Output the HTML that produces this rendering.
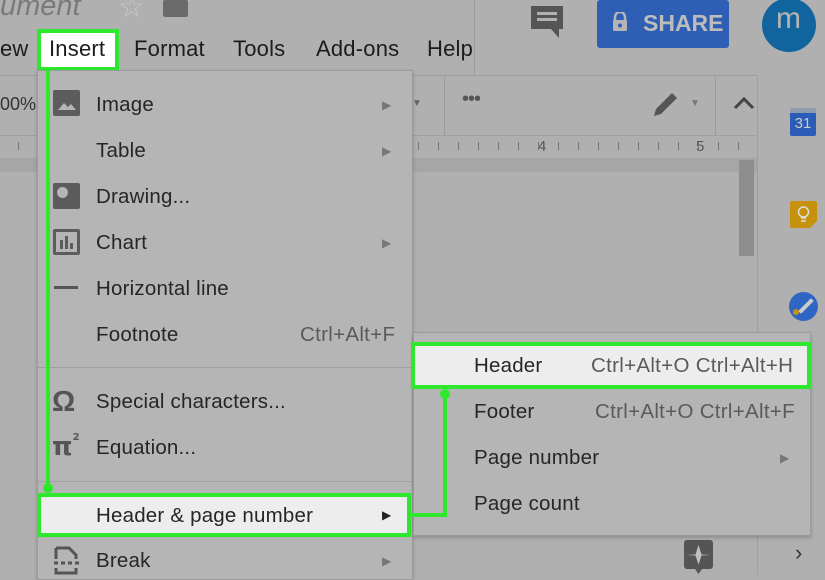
<!DOCTYPE html>
<html><head><style>
*{margin:0;padding:0;box-sizing:border-box}
body{width:825px;height:575px;overflow:hidden;background:#b0b0b0;font-family:"Liberation Sans",Arial,sans-serif;position:relative;color:#222}
.a{position:absolute}
.t{position:absolute;font-size:20.5px;color:#262626;white-space:nowrap;line-height:24px;letter-spacing:0.2px}
.mb{position:absolute;font-size:22px;color:#1c1c1c;top:36px;line-height:26px;letter-spacing:0.2px}
.arr{position:absolute;font-size:12px;color:#777}
.sc{position:absolute;font-size:20.5px;color:#5a5a5a;line-height:24px;white-space:nowrap;letter-spacing:0.3px}
.g{position:absolute;background:#2ee82e}
</style></head><body>
<!-- top bar -->
<div class="a" style="left:0;top:-10px;font-size:29px;font-style:italic;color:#7a7a7a">ument</div>
<div class="a" style="left:118px;top:-10px;font-size:30px;color:#c6c6c6">☆</div>
<div class="a" style="left:163px;top:0;width:25px;height:17px;background:#6b6b6b;border-radius:2px"></div>
<div class="a" style="left:474px;top:0;width:1px;height:75px;background:#9c9c9c"></div>
<svg class="a" style="left:530px;top:5px" width="34" height="34" viewBox="0 0 34 34"><path d="M1 1h32v23H29v9l-8-9H1z" fill="#555"/><rect x="7" y="7" width="20" height="3" fill="#b0b0b0"/><rect x="7" y="13" width="20" height="3" fill="#b0b0b0"/></svg>
<div class="a" style="left:597px;top:0;width:132px;height:48px;background:#2f5eb5;border-radius:3px"></div>
<svg class="a" style="left:612px;top:12px" width="16" height="20" viewBox="0 0 16 20"><path d="M3 8V5a5 5 0 0110 0v3" stroke="#b5b5b5" stroke-width="2.5" fill="none"/><rect x="1" y="8" width="14" height="11" rx="1" fill="#b5b5b5"/><circle cx="8" cy="13.5" r="2" fill="#2f5eb5"/></svg>
<div class="a" style="left:643px;top:10px;font-size:23px;color:#bcbcbc;font-weight:bold">SHARE</div>
<div class="a" style="left:762px;top:-2px;width:54px;height:54px;border-radius:50%;background:#12649e"></div>
<div class="a" style="left:776px;top:2px;font-size:30px;color:#b5b5b5">m</div>
<!-- menubar -->
<div class="mb" style="left:0">ew</div>
<div class="a" style="left:37px;top:29px;width:82px;height:42px;background:#fff;border:4px solid #2ee82e"></div>
<div class="mb" style="left:49px">Insert</div>
<div class="mb" style="left:134px">Format</div>
<div class="mb" style="left:233px">Tools</div>
<div class="mb" style="left:316px">Add-ons</div>
<div class="mb" style="left:427px">Help</div>
<!-- toolbar -->
<div class="a" style="left:0;top:75px;width:757px;height:1px;background:#9c9c9c"></div>
<div class="a" style="left:0;top:135px;width:757px;height:1px;background:#a0a0a0"></div>
<div class="a" style="left:0;top:158px;width:757px;height:14px;background:#a6a6a6"></div>
<div class="a" style="left:0;top:94px;font-size:18px;color:#333">00%</div>
<div class="a" style="left:412px;top:98px;font-size:10px;color:#666">▼</div>
<div class="a" style="left:444px;top:76px;width:1px;height:59px;background:#9c9c9c"></div>
<div class="a" style="left:462px;top:88px;font-size:20px;color:#555;letter-spacing:-1px">•••</div>
<svg class="a" style="left:652px;top:90px" width="30" height="28" viewBox="0 0 30 28"><path d="M2 26l2-7L20 3l5 5L9 24z" fill="#555"/></svg>
<div class="a" style="left:690px;top:98px;font-size:10px;color:#777">▼</div>
<div class="a" style="left:715px;top:76px;width:1px;height:59px;background:#9c9c9c"></div>
<svg class="a" style="left:733px;top:96px" width="22" height="14" viewBox="0 0 22 14"><path d="M2 12L11 3l9 9" stroke="#444" stroke-width="3" fill="none"/></svg>
<div class="a" style="left:757px;top:76px;width:1px;height:499px;background:#a0a0a0"></div>
<div class="a" style="left:538px;top:138px;font-size:15px;color:#555">4</div>
<div class="a" style="left:696px;top:138px;font-size:15px;color:#555">5</div>
<div class="a" style="left:0;top:142px;width:757px;height:8px;background:repeating-linear-gradient(90deg,transparent 0 18px,#777 18px 19px,transparent 19px 20px)"></div>
<div class="a" style="left:739px;top:160px;width:15px;height:96px;background:#8e8e8e"></div>
<!-- right panel icons -->
<div class="a" style="left:790px;top:108px;width:26px;height:28px;background:#2a5cb8;border-radius:2px;border-top:5px solid #8f9bb0;color:#ccc;font-size:15px;text-align:center;line-height:22px">31</div>
<svg class="a" style="left:790px;top:201px" width="27" height="27" viewBox="0 0 27 27"><path d="M0 2a2 2 0 012-2h23a2 2 0 012 2v18l-7 7H2a2 2 0 01-2-2z" fill="#c6920e"/><circle cx="13.5" cy="11" r="5" stroke="#ddd" stroke-width="1.5" fill="none"/><path d="M11 17h5M11 20h5" stroke="#ddd" stroke-width="1.5"/></svg>
<div class="a" style="left:789px;top:292px;width:29px;height:29px;border-radius:50%;background:#2f66c4"></div>
<div class="a" style="left:797px;top:304px;width:18px;height:4px;background:#ccc;transform:rotate(-45deg)"></div>
<div class="a" style="left:793px;top:309px;width:6px;height:6px;border-radius:50%;background:#c6920e"></div>
<svg class="a" style="left:684px;top:540px" width="29" height="35" viewBox="0 0 29 35"><rect x="0" y="0" width="29" height="29" rx="3" fill="#555"/><path d="M14.5 5l3 9.5 9 0.5-9 .5-3 9-3-9-9-.5 9-.5z" fill="#c0c0c0"/><path d="M11 29h7l-3.5 5z" fill="#555"/></svg>
<div class="a" style="left:795px;top:540px;font-size:22px;color:#333">›</div>
<!-- insert menu -->
<div class="a" style="left:37px;top:70px;width:376px;height:510px;background:#b5b5b5;border:1px solid #9a9a9a;box-shadow:0 2px 4px rgba(0,0,0,.2)"></div>
<div class="a" style="left:53px;top:90px;width:27px;height:26px;background:#5c5c5c;border-radius:2px"></div>
<svg class="a" style="left:53px;top:90px" width="27" height="26"><path d="M5 20l6-7 4 4 3-3 5 6z" fill="#b5b5b5"/></svg>
<div class="t" style="left:96px;top:93px">Image</div><div class="arr" style="left:382px;top:98px">▶</div>
<div class="t" style="left:96px;top:139px">Table</div><div class="arr" style="left:382px;top:144px">▶</div>
<div class="a" style="left:53px;top:183px;width:27px;height:26px;background:#5c5c5c;border-radius:2px"></div>
<div class="a" style="left:57px;top:187px;width:11px;height:11px;border-radius:50%;background:#b5b5b5"></div>
<div class="t" style="left:96px;top:185px">Drawing...</div>
<svg class="a" style="left:53px;top:229px" width="27" height="26"><rect width="27" height="26" rx="2" fill="#5c5c5c"/><rect x="3" y="3" width="21" height="20" fill="#b5b5b5"/><rect x="7" y="11" width="3" height="9" fill="#5c5c5c"/><rect x="12" y="7" width="3" height="13" fill="#5c5c5c"/><rect x="17" y="14" width="3" height="6" fill="#5c5c5c"/></svg>
<div class="t" style="left:96px;top:231px">Chart</div><div class="arr" style="left:382px;top:236px">▶</div>
<div class="a" style="left:54px;top:286px;width:24px;height:3px;background:#555"></div>
<div class="t" style="left:96px;top:277px">Horizontal line</div>
<div class="t" style="left:96px;top:323px">Footnote</div><div class="sc" style="left:300px;top:323px">Ctrl+Alt+F</div>
<div class="a" style="left:38px;top:367px;width:374px;height:1px;background:#a0a0a0"></div>
<div class="a" style="left:52px;top:386px;font-size:29px;color:#555;font-weight:bold">Ω</div>
<div class="t" style="left:96px;top:390px">Special characters...</div>
<div class="a" style="left:52px;top:432px;font-size:26px;color:#555;font-weight:bold;font-family:'DejaVu Sans',sans-serif">π<span style="font-size:10px;vertical-align:top">2</span></div>
<div class="t" style="left:96px;top:436px">Equation...</div>
<div class="a" style="left:38px;top:481px;width:374px;height:1px;background:#a0a0a0"></div>
<div class="a" style="left:37px;top:493px;width:374px;height:44px;background:#ededed;border:4px solid #2ee82e"></div>
<div class="t" style="left:96px;top:504px">Header &amp; page number</div><div class="arr" style="left:382px;top:508px;color:#222">▶</div>
<svg class="a" style="left:53px;top:546px" width="27" height="29"><path d="M3 2h13l7 7v4M3 2v11" stroke="#555" stroke-width="3" fill="none"/><path d="M1 17h25" stroke="#555" stroke-width="3" stroke-dasharray="4 3"/><path d="M3 22v5h20v-5" stroke="#555" stroke-width="3" fill="none"/></svg>
<div class="t" style="left:96px;top:549px">Break</div><div class="arr" style="left:382px;top:554px">▶</div>
<!-- submenu -->
<div class="a" style="left:413px;top:332px;width:398px;height:204px;background:#b5b5b5;border:1px solid #9a9a9a;box-shadow:0 2px 4px rgba(0,0,0,.2)"></div>
<div class="a" style="left:411px;top:342px;width:400px;height:47px;background:#ededed;border:4px solid #2ee82e"></div>
<div class="t" style="left:474px;top:354px">Header</div><div class="sc" style="left:591px;top:354px">Ctrl+Alt+O Ctrl+Alt+H</div>
<div class="t" style="left:474px;top:400px">Footer</div><div class="sc" style="left:595px;top:400px">Ctrl+Alt+O Ctrl+Alt+F</div>
<div class="t" style="left:474px;top:446px">Page number</div><div class="arr" style="left:780px;top:451px">▶</div>
<div class="t" style="left:474px;top:492px">Page count</div>
<!-- connectors -->
<div class="g" style="left:46px;top:70px;width:4px;height:418px"></div>
<div class="g" style="left:43px;top:483px;width:10px;height:10px;border-radius:50%"></div>
<div class="g" style="left:443px;top:393px;width:4px;height:124px"></div>
<div class="g" style="left:440px;top:389px;width:10px;height:10px;border-radius:50%"></div>
<div class="g" style="left:410px;top:513px;width:37px;height:4px"></div>
</body></html>
